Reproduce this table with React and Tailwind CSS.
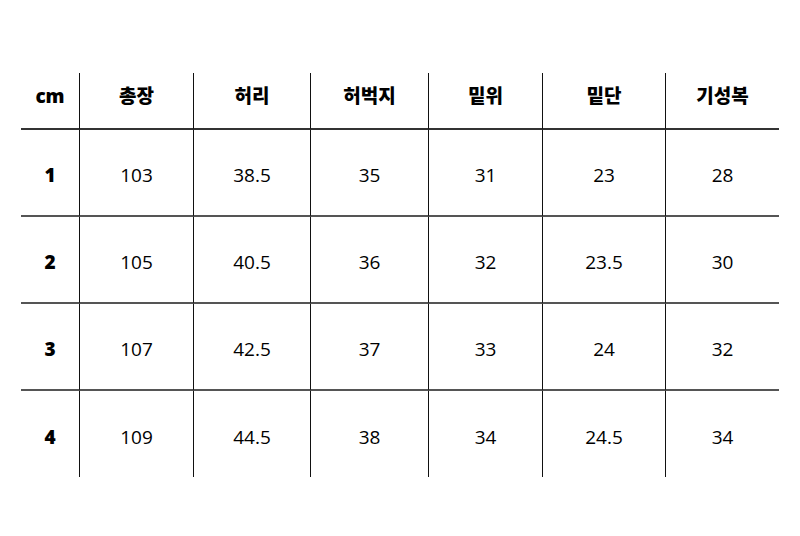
import React from 'react';

const headers = ['cm', '총장', '허리', '허벅지', '밑위', '밑단', '기성복'];

const rows = [
  ['1', '103', '38.5', '35', '31', '23', '28'],
  ['2', '105', '40.5', '36', '32', '23.5', '30'],
  ['3', '107', '42.5', '37', '33', '24', '32'],
  ['4', '109', '44.5', '38', '34', '24.5', '34'],
];

const font = { fontFamily: '"Open Sans", "Noto Sans CJK KR", sans-serif' };

const App = () => {
  return (
    <div className="w-[800px] h-[536px] bg-white pt-[73px] pl-[21px]" style={font}>
      <div className="grid grid-cols-[58px_114px_117px_118px_114px_123px_114px] grid-rows-[57px_87px_87px_87px_86px] text-black">
        {headers.map((h, i) => (
          <div
            key={h}
            className={`flex justify-center pt-[9px] border-b-2 border-[#333] text-[19px] font-black ${i > 0 ? 'border-l-[1.5px] border-l-[#111]' : ''}`}
          >
            {h}
          </div>
        ))}
        {rows.map((row, r) =>
          row.map((cell, i) => (
            <div
              key={r + '-' + i}
              className={`flex items-center justify-center pt-[6px] text-[19px] border-[#555] ${r < rows.length - 1 ? 'border-b-2' : ''} ${i > 0 ? 'border-l-[1.5px] border-l-[#111]' : 'font-extrabold'}`}
            >
              {cell}
            </div>
          ))
        )}
      </div>
    </div>
  );
};

export default App;
